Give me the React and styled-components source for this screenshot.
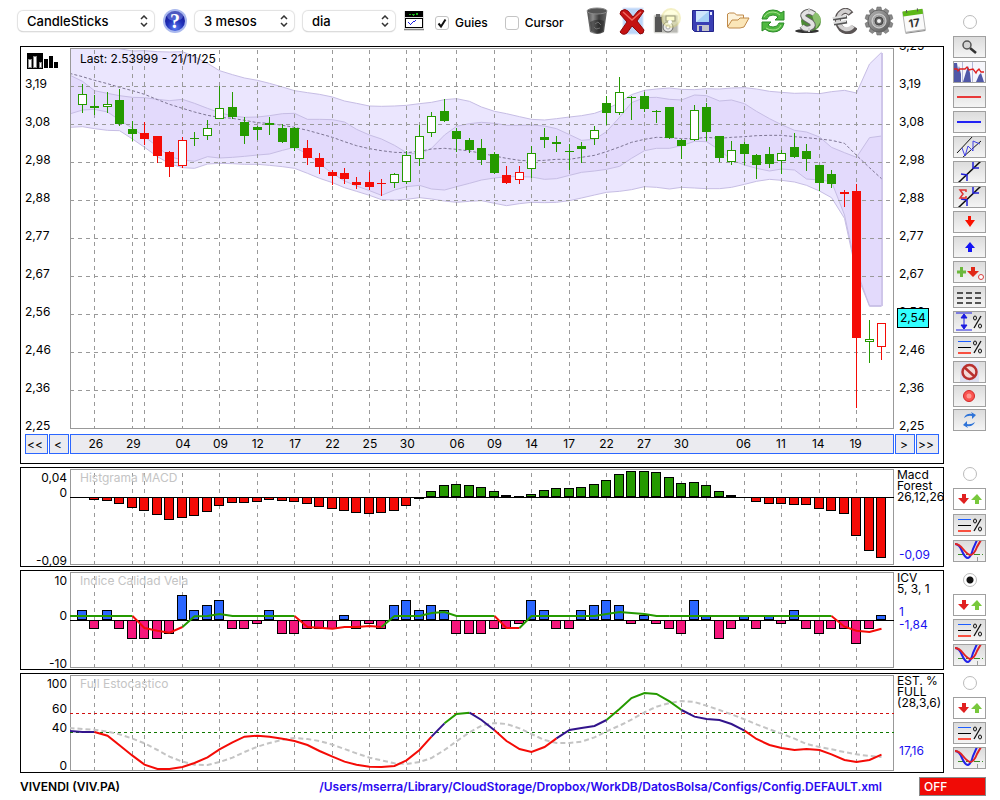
import { Fragment, useState } from 'react';
import styled, { createGlobalStyle } from 'styled-components';

const GREEN = '#259a00';
const RED = '#f40b06';
const BLUE = '#2b66ff';
const PINK = '#f5167c';
const INDIGO = '#32148c';
const PLOT_WIDTH = 824;

// x of the nth session, from the left edge of a plot
const sx = (i) => Math.floor(12.2 + 12.49 * i);

const guides = [1, 4, 5, 8, 11, 14, 17, 20, 23, 26, 27, 30, 33, 36, 39, 42, 45, 48, 50, 53, 56, 59, 62];

const dates = [
  [1, '26'], [4, '29'], [8, '04'], [11, '09'], [14, '12'], [17, '17'], [20, '22'], [23, '25'], [26, '30'], [30, '06'],
  [33, '09'], [36, '14'], [39, '17'], [42, '22'], [45, '27'], [48, '30'], [53, '06'], [56, '11'], [59, '14'], [62, '19'],
];

const prices = ['3,19', '3,08', '2,98', '2,88', '2,77', '2,67', '2,56', '2,46', '2,36', '2,25'];

// Band series start one session before the first candle
const bands = {
  outerTop: [
    0, 8, 14, 20, 26, 33, 32, 35, 36, 35, 50, 70, 92, 104, 114, 121, 130, 141, 152, 158, 163, 171, 183, 190, 198, 199, 198,
    196, 191, 187, 179, 176, 184, 201, 214, 221, 230, 238, 240, 236, 231, 227, 220, 207, 188, 164, 151, 147, 144, 148, 149,
    146, 147, 144, 143, 147, 154, 157, 160, 159, 161, 155, 151, 159, 72, 37,
  ],
  innerTop: [
    105, 124, 152, 160, 167, 172, 173, 178, 182, 178, 190, 205, 218, 228, 232, 231, 227, 221, 220, 238, 238, 239, 246, 268,
    285, 297, 316, 338, 343, 325, 285, 259, 251, 247, 250, 256, 256, 255, 258, 266, 284, 301, 298, 275, 232, 188, 173, 172,
    178, 180, 165, 167, 183, 180, 191, 214, 236, 254, 271, 276, 291, 322, 338, 352, 293, 288,
  ],
  middle: [
    100, 110, 121, 131, 142, 152, 163, 179, 193, 205, 216, 226, 232, 235, 241, 248, 250, 256, 262, 271, 281, 292, 305, 317,
    326, 332, 337, 338, 334, 327, 325, 328, 333, 340, 348, 355, 361, 363, 361, 358, 358, 352, 346, 335, 321, 307, 298, 292,
    293, 296, 296, 292, 295, 292, 290, 287, 286, 286, 290, 293, 297, 301, 310, 346, 383, 416,
  ],
  innerBottom: [
    222, 210, 208, 216, 240, 265, 290, 320, 350, 360, 364, 350, 354, 352, 349, 345, 342, 331, 322, 342, 372, 400, 423, 438,
    452, 466, 450, 440, 436, 447, 450, 440, 430, 420, 414, 410, 410, 411, 418, 416, 406, 397, 393, 388, 379, 355, 332, 325,
    325, 317, 304, 305, 330, 360, 375, 385, 393, 387, 390, 417, 420, 425, 525, 690, 797, 797,
  ],
  outerBottom: [
    262, 260, 266, 271, 272, 297, 322, 350, 371, 383, 385, 372, 370, 371, 373, 373, 376, 380, 385, 400, 415, 428, 443, 454,
    466, 479, 480, 478, 473, 477, 483, 487, 484, 482, 490, 497, 491, 487, 488, 487, 482, 474, 465, 457, 454, 449, 440, 442,
    447, 442, 444, 446, 446, 442, 433, 424, 418, 421, 426, 436, 453, 473, 535, 700, 799, 799,
  ],
};

// high, body top, body bottom, low, kind (upper case is filled, G green, R red)
const candles = [
  [132, 162, 195, 218, 'g'], [166, 198, 204, 224, 'G'], [156, 192, 201, 218, 'g'], [147, 180, 251, 257, 'G'],
  [243, 267, 281, 304, 'G'], [246, 279, 297, 315, 'R'], [288, 288, 347, 369, 'R'], [333, 336, 381, 410, 'R'],
  [292, 300, 378, 384, 'r'], [276, 294, 297, 318, 'G'], [240, 264, 288, 300, 'g'], [138, 204, 237, 237, 'g'],
  [156, 201, 231, 237, 'G'], [231, 246, 288, 312, 'G'], [258, 261, 270, 300, 'G'], [231, 249, 255, 285, 'G'],
  [252, 264, 306, 309, 'G'], [262, 264, 324, 333, 'G'], [300, 324, 354, 375, 'R'], [339, 354, 381, 402, 'R'],
  [390, 396, 408, 435, 'R'], [384, 399, 417, 432, 'R'], [411, 426, 435, 447, 'R'], [396, 426, 441, 450, 'R'],
  [417, 429, 432, 468, 'R'], [399, 402, 429, 444, 'g'], [333, 345, 426, 432, 'g'], [255, 288, 357, 378, 'g'],
  [216, 228, 279, 291, 'g'], [177, 213, 243, 246, 'G'], [264, 273, 297, 336, 'G'], [294, 300, 330, 339, 'G'],
  [297, 324, 360, 375, 'G'], [336, 342, 399, 402, 'G'], [378, 405, 429, 432, 'R'], [378, 396, 420, 432, 'r'],
  [318, 339, 387, 414, 'g'], [264, 291, 300, 324, 'G'], [288, 306, 312, 336, 'G'], [312, 333, 336, 390, 'G'],
  [306, 318, 327, 368, 'G'], [258, 270, 297, 315, 'g'], [168, 189, 219, 255, 'G'], [111, 156, 219, 225, 'g'],
  [168, 171, 174, 240, 'G'], [156, 168, 207, 216, 'G'], [210, 213, 216, 249, 'G'], [201, 201, 294, 297, 'G'],
  [297, 300, 318, 357, 'G'], [195, 210, 300, 303, 'g'], [189, 201, 276, 303, 'G'], [288, 288, 354, 366, 'G'],
  [303, 330, 366, 375, 'g'], [306, 312, 342, 375, 'G'], [342, 345, 375, 417, 'G'], [321, 342, 372, 384, 'G'],
  [330, 339, 363, 402, 'g'], [279, 321, 351, 354, 'G'], [312, 333, 357, 393, 'G'], [375, 375, 429, 453, 'G'],
  [390, 402, 432, 444, 'G'], [450, 456, 462, 501, 'R'], [432, 453, 894, 1104, 'R'], [840, 897, 906, 969, 'g'],
  [849, 849, 921, 960, 'r'],
];

const macd = [
  0, -3, -4, -7, -11, -14, -18, -23, -21, -19, -15, -9, -6, -6, -5, -3, -4, -5, -7, -10, -12, -14, -16, -17, -16, -14, -9,
  -2, 6, 12, 13, 12, 10, 6, 2, 1, 3, 7, 9, 9, 10, 13, 17, 23, 26, 26, 25, 20, 14, 15, 12, 6, 2, 0, -5, -7, -7, -8, -8,
  -12, -14, -17, -39, -54, -61,
];

const icv = [
  2, -2, 2, -2, -4, -4, -4, -3, 5, 2, 3, 4, -2, -2, -1, 2, -3, -3, -2, -2, -2, 1, -2, -1, -2, 3, 4, 2, 3, 2, -3, -3, -3,
  -2, -2, -1, 4, 2, -2, -2, 2, 3, 4, 3, -1, 1, -1, -2, -3, 4, 1, -4, -2, 1, -2, 1, -1, 2, -2, -3, -2, -2, -5, -2, 1,
];

// [colour, first session, values]
const icvLine = [
  [GREEN, -1, [168, 168, 168, 168, 168, 168]],
  [RED, 4, [168, 204, 212, 218, 201]],
  [GREEN, 8, [201, 169, 168, 162, 168, 168, 168, 168, 168, 168]],
  [RED, 17, [168, 201, 203, 206, 201, 201, 198, 201]],
  [GREEN, 24, [201, 168, 168, 168, 159, 156, 168, 168, 168, 168]],
  [RED, 33, [168, 204, 204]],
  [GREEN, 35, [204, 168, 168, 168, 168, 168, 168, 162, 156, 159, 162, 168, 168]],
  [GREEN, 47, [168, 168, 168, 168, 168, 168, 168, 168, 168, 168, 168, 168, 168, 168]],
  [RED, 60, [168, 200, 212, 216, 206]],
];

const stochLine = [
  [INDIGO, -1, [513, 516, 516]],
  [
    RED, 1,
    [516, 527, 556, 587, 614, 627, 627, 621, 609, 592, 568, 547, 530, 527, 530, 536, 543, 555, 573, 590, 605, 614, 620, 621, 618, 601, 570, 530],
  ],
  [INDIGO, 28, [530, 490]],
  [GREEN, 29, [490, 462, 458]],
  [INDIGO, 31, [458, 480, 511]],
  [RED, 33, [511, 543, 567, 576, 561, 535]],
  [INDIGO, 38, [535, 510, 504, 498, 480]],
  [GREEN, 42, [480, 447, 414, 399, 402, 424, 450]],
  [INDIGO, 48, [450, 470, 477, 480, 492, 512]],
  [RED, 53, [512, 537, 555, 564, 570, 567, 570, 583, 600, 606, 600, 584]],
];

const stochSignal = [
  504, 507, 509, 515, 523, 536, 550, 570, 590, 605, 614, 615, 606, 593, 576, 560, 549, 539, 534, 537, 543, 554, 567, 580,
  593, 601, 610, 612, 606, 594, 570, 544, 517, 497, 489, 492, 505, 522, 540, 549, 549, 545, 532, 514, 497, 479, 457, 440,
  429, 423, 426, 437, 450, 463, 478, 493, 508, 521, 536, 552, 561, 568, 576, 583, 588, 591,
];

const priceY = (v) => v / 3 - 8;
const icvY = (v) => v / 3 - 12;
const stochY = (v) => v / 3 - 115;

const points = (values, first, y) => values.map((v, i) => `${sx(first + i) + 0.5},${y(v)}`);

const area = (top, bottom) => [...points(top, -1, priceY), ...points(bottom, -1, priceY).reverse()].join(' ');

const Guides = ({ from, to }) =>
  guides.map((i) => (
    <line key={i} x1={sx(i) + 0.5} x2={sx(i) + 0.5} y1={from} y2={to} stroke="#999" strokeDasharray="4 4" />
  ));

const Frame = ({ height }) => (
  <rect x="0.5" y="0.5" width={PLOT_WIDTH - 1} height={height - 1} fill="none" stroke="#999" />
);

const PlotSvg = ({ height, children }) => (
  <Plot viewBox={`0 0 ${PLOT_WIDTH} ${height}`} height={height} preserveAspectRatio="none" aria-hidden="true">
    {children}
  </Plot>
);

const Box = ({ x, y, width, height, border, fill }) => (
  <>
    <rect x={x} y={y} width={width} height={height} fill={border} />
    {height > 2 && <rect x={x + 1} y={y + 1} width={width - 2} height={height - 2} fill={fill} />}
  </>
);

const Bars = ({ values, zero, size, up, down }) => (
  <g shapeRendering="crispEdges">
    {values.map((v, i) => (
      <Box
        key={i}
        x={sx(i) - 5}
        y={v > 0 ? zero - size(v) : zero}
        width={10}
        height={size(v)}
        border="#000"
        fill={v > 0 ? up : down}
      />
    ))}
    <line x1="0" x2={PLOT_WIDTH} y1={zero + 0.5} y2={zero + 0.5} stroke="#000" />
  </g>
);

const Segments = ({ data, y }) =>
  data.map(([color, first, values]) => (
    <polyline key={`${color}${first}`} points={points(values, first, y).join(' ')} fill="none" stroke={color} strokeWidth="2" />
  ));

const PricePlot = () => (
  <PlotSvg height={381}>
    <polygon points={area(bands.outerTop, bands.outerBottom)} fill="#ebe6fe" />
    <polygon points={area(bands.innerTop, bands.innerBottom)} fill="#e3dafc" />
    {['outerTop', 'innerTop', 'innerBottom', 'outerBottom'].map((name) => (
      <polyline key={name} points={points(bands[name], -1, priceY).join(' ')} fill="none" stroke="#c6bde4" />
    ))}
    <line x1={sx(64) + 1} x2={sx(64) + 1} y1="5" y2="258" stroke="#cfc6ea" strokeWidth="2" />
    <polyline points={points(bands.middle, -1, priceY).join(' ')} fill="none" stroke="#7d7593" strokeDasharray="3 2" />
    <g shapeRendering="crispEdges">
      {prices.slice(0, -1).map((price, i) => (
        <line key={price} x1="0" x2={PLOT_WIDTH} y1={38.5 + i * 38} y2={38.5 + i * 38} stroke="#999" strokeDasharray="4 4" />
      ))}
      <Guides from={2} to={381} />
      <Frame height={381} />
      {candles.map(([high, top, bottom, low, kind], i) => {
        const color = kind.toLowerCase() === 'g' ? GREEN : RED;
        const hollow = kind === 'g' || kind === 'r';
        const y1 = Math.round(priceY(top));
        const y2 = Math.round(priceY(bottom));
        return (
          <Fragment key={i}>
            <line x1={sx(i) + 0.5} x2={sx(i) + 0.5} y1={Math.round(priceY(high))} y2={Math.round(priceY(low))} stroke={color} />
            <Box x={sx(i) - 4} y={y1} width={9} height={y2 - y1} border={color} fill={hollow ? '#fff' : color} />
          </Fragment>
        );
      })}
    </g>
  </PlotSvg>
);

const MacdPlot = () => (
  <PlotSvg height={96}>
    <g shapeRendering="crispEdges">
      <Guides from={4} to={96} />
      <Frame height={96} />
    </g>
    <Bars values={macd} zero={28} size={Math.abs} up={GREEN} down={RED} />
  </PlotSvg>
);

const IcvPlot = () => (
  <PlotSvg height={96}>
    <g shapeRendering="crispEdges">
      <Guides from={4} to={96} />
      <Frame height={96} />
    </g>
    <Bars values={icv} zero={48} size={(v) => (v > 0 ? v * 5 : -v * 5 - 1)} up={BLUE} down={PINK} />
    <Segments data={icvLine} y={icvY} />
  </PlotSvg>
);

const StochPlot = () => (
  <PlotSvg height={96}>
    <g shapeRendering="crispEdges">
      <Guides from={4} to={96} />
      <Frame height={96} />
      <line x1="0" x2={PLOT_WIDTH} y1="38.5" y2="38.5" stroke="#d01010" strokeDasharray="3 3" />
      <line x1="0" x2={PLOT_WIDTH} y1="57.5" y2="57.5" stroke="#107800" strokeDasharray="3 3" />
    </g>
    <polyline
      points={points(stochSignal, -1, stochY).join(' ')}
      fill="none"
      stroke="#c4c4c4"
      strokeWidth="2"
      strokeDasharray="5 3"
    />
    <Segments data={stochLine} y={stochY} />
  </PlotSvg>
);

/* Toolbar icons */

const HelpIcon = () => (
  <svg width="24" height="24" viewBox="0 0 24 24">
    <defs>
      <radialGradient id="help" cx="50%" cy="85%" r="85%">
        <stop offset="0" stopColor="#5a7cf0" />
        <stop offset="0.5" stopColor="#1f2fb8" />
        <stop offset="1" stopColor="#14148a" />
      </radialGradient>
    </defs>
    <circle cx="12" cy="12" r="12" fill="#a9b8ee" />
    <circle cx="12" cy="12" r="10" fill="url(#help)" />
    <ellipse cx="12" cy="7" rx="8" ry="5" fill="#8fa4f5" opacity="0.45" />
    <text x="12" y="19" textAnchor="middle" fontFamily="Liberation Serif, serif" fontWeight="700" fontSize="20" fill="#fff">
      ?
    </text>
  </svg>
);

const MonitorIcon = () => (
  <svg width="20" height="20" viewBox="0 0 20 20" shapeRendering="crispEdges">
    <rect width="20" height="20" fill="#ddd" />
    <rect x="1" width="18" height="6" fill="#000" />
    <path d="M5 3h2v1h-2zM8 3h3v1h-3zM12 2h2v2h-2zM9 4h1v1h-1z" fill="#18b018" />
    <rect x="1.5" y="7.5" width="17" height="9" fill="#fff" stroke="#000" />
    <path d="M4 11l2 2 1 0 3-3 1 0 1-1" fill="none" stroke="#2020e0" />
    <rect y="18" width="20" height="1" fill="#888" />
  </svg>
);

const TrashIcon = () => (
  <svg width="22" height="28" viewBox="0 0 22 28">
    <defs>
      <linearGradient id="bin">
        <stop offset="0" stopColor="#4a4a4a" />
        <stop offset="0.3" stopColor="#8c8c8c" />
        <stop offset="0.6" stopColor="#3c3c3c" />
        <stop offset="1" stopColor="#6a6a6a" />
      </linearGradient>
    </defs>
    <path d="M1 4l3 21q7 4 14 0l3-21z" fill="url(#bin)" />
    <ellipse cx="11" cy="4" rx="10" ry="3" fill="#555" stroke="#8a8a8a" />
    <path d="M4 15q7-4 14-1l-1 10q-6 4-12 0z" fill="#222" opacity="0.5" />
    <path d="M9 17l3-2 3 3M8 20l2 2 4-1" fill="none" stroke="#707070" />
  </svg>
);

const DeleteIcon = () => (
  <svg width="26" height="28" viewBox="0 0 26 28">
    <rect x="4" y="1" width="20" height="26" fill="#bcd6f8" stroke="#dbe8fb" />
    <path
      d="M2 4q4-3 7 0l5 6 5-6q3-3 6 0l-7 10 7 9q0 4-4 4l-8-8-5 7q-4 3-7-1l7-10-7-8z"
      fill="#c41212"
      stroke="#8c0808"
    />
    <path d="M4 5l9 8 9-8" fill="none" stroke="#ee6a60" strokeWidth="1.500" />
  </svg>
);

const CameraIcon = () => (
  <svg width="28" height="28" viewBox="0 0 28 28">
    <rect x="1" y="8" width="24" height="18" rx="1" fill="#b9b9b4" stroke="#e4e4e0" />
    <rect x="2" y="10" width="7" height="15" fill="#555" />
    <rect x="3" y="7" width="4" height="3" fill="#666" />
    <rect x="13" y="9" width="9" height="5" fill="#fafae0" stroke="#555" />
    <circle cx="15" cy="20" r="5" fill="#e8e8e8" stroke="#666" />
    <circle cx="15" cy="20" r="2" fill="#fff" stroke="#aaa" />
    <circle cx="18" cy="11" r="9" fill="#ffffb0" opacity="0.4" stroke="#e4dc70" strokeWidth="2" />
    <circle cx="17" cy="15" r="2" fill="#fff" />
  </svg>
);

const SaveIcon = () => (
  <svg width="22" height="22" viewBox="0 0 22 22">
    <path d="M.5.5h21v21H2.500l-2-2z" fill="#3a3fb4" stroke="#23258a" />
    <rect x="4" y="1" width="13" height="11" fill="#cfe6fb" />
    <path d="M4 12L17 1v11z" fill="#a7d0f5" />
    <rect x="18" y="2" width="2" height="3" fill="#e4e8ff" />
    <rect x="5" y="15" width="12" height="6" fill="#c4c4cc" />
    <rect x="7" y="16" width="3" height="5" fill="#3a3fb4" />
  </svg>
);

const FolderIcon = () => (
  <svg width="24" height="20" viewBox="0 0 24 20">
    <path d="M1.500 16V3l2-1h5l2 2h7v5" fill="#fdf3dc" stroke="#c08a4a" />
    <path d="M1.500 16L6 9h6l2-2h9l-5 9-4 1H3z" fill="#fbe6b8" stroke="#c08a4a" strokeLinejoin="round" />
  </svg>
);

const ReloadIcon = () => (
  <svg width="24" height="24" viewBox="0 0 24 24">
    <path d="M1 10Q3 1 12 1q5 0 8 3l3-2v9h-9l3-3q-2-2-5-2-5 0-6 4z" fill="#4fb840" stroke="#2b8a28" />
    <path d="M23 14q-2 9-11 9-5 0-8-3l-3 2v-9h9l-3 3q2 2 5 2 5 0 6-4z" fill="#4fb840" stroke="#2b8a28" />
    <path d="M3 8q3-5 9-5 4 0 7 3M5 19q3 2 7 2 6 0 8-5" fill="none" stroke="#a6e08c" />
  </svg>
);

const DollarIcon = () => (
  <svg width="26" height="26" viewBox="0 0 26 26">
    <ellipse cx="12" cy="23" rx="12" ry="2" fill="#333" />
    <circle cx="16" cy="13" r="10" fill="#4c8a34" />
    <path d="M16 3a10 10 0 0 1 10 10l-5 8z" fill="#8cc070" />
    <path d="M19 6q-5-4-9-1t1 6l5 3q4 4-1 6t-8-2" fill="none" stroke="#666" strokeWidth="6" />
    <path d="M19 6q-5-4-9-1t1 6l5 3q4 4-1 6t-8-2" fill="none" stroke="#e2e2e2" strokeWidth="4" />
    <path d="M14 0v4M14 20v4" stroke="#ccc" strokeWidth="2" />
  </svg>
);

const EuroIcon = () => (
  <svg width="26" height="26" viewBox="0 0 26 26">
    <path d="M20 6q-4-5-9-2t-4 10q2 8 8 9t9-4" fill="none" stroke="#5a5454" strokeWidth="6" />
    <path d="M19 5q-4-4-8-1t-4 9q2 7 7 8t8-3" fill="none" stroke="#d2d0d0" strokeWidth="4" />
    <path d="M2 11l14-2M3 16l13-2" stroke="#555" strokeWidth="3" />
    <path d="M2 10l13-2M3 15l12-2" stroke="#ddd" strokeWidth="2" />
  </svg>
);

const GearIcon = () => (
  <svg width="30" height="30" viewBox="0 0 30 30">
    <defs>
      <linearGradient id="gear" x2="1" y2="1">
        <stop offset="0" stopColor="#b5b5b5" />
        <stop offset="1" stopColor="#555" />
      </linearGradient>
    </defs>
    <g fill="#8a8a8a" stroke="#606060" strokeWidth="0.5">
      {[0, 36, 72, 108, 144, 180, 216, 252, 288, 324].map((a) => (
        <path key={a} d="M12 5l1-4h4l1 4z" transform={`rotate(${a} 15 15)`} />
      ))}
    </g>
    <circle cx="15" cy="15" r="11" fill="url(#gear)" stroke="#666" />
    <circle cx="15" cy="15" r="7" fill="#a4a4a4" stroke="#d8d8d8" />
    <circle cx="15" cy="15" r="4" fill="#666" stroke="#444" />
    <circle cx="15" cy="15" r="2" fill="#f4f4f4" />
  </svg>
);

const CalendarIcon = () => (
  <svg width="26" height="26" viewBox="0 0 26 26">
    <g transform="rotate(-8 13 13)">
      <rect x="3" y="3" width="20" height="20" fill="#fafafa" stroke="#b4b4b4" />
      <rect x="3" y="2" width="20" height="5" fill="#5cb818" />
      <path d="M7 1v3M18 1v3" stroke="#555" />
      <path d="M3 24h20" stroke="#888" />
      <text x="13" y="19" textAnchor="middle" fontFamily="Inter, sans-serif" fontWeight="700" fontSize="11" fill="#333">
        17
      </text>
    </g>
  </svg>
);

/* Side bar icons, 31 x 20 */

const SideSvg = ({ children }) => (
  <svg width="31" height="20" viewBox="0 0 31 20" aria-hidden="true">
    {children}
  </svg>
);

const Percent = () => (
  <g fill="none" stroke="#111">
    <path d="M27 4l-7 12" strokeWidth="1.300" />
    <ellipse cx="21" cy="6" rx="1.500" ry="2" />
    <ellipse cx="26" cy="14" rx="1.500" ry="2" />
  </g>
);

const LoupeIcon = () => (
  <SideSvg>
    <path d="M16 11l6 5" stroke="#333" strokeWidth="2.500" />
    <circle cx="13" cy="8" r="4" fill="#d4d4d4" stroke="#555" strokeWidth="1.500" />
  </SideSvg>
);

const HistogramIcon = () => (
  <SideSvg>
    <rect width="31" height="20" fill="#f6f6fb" />
    <path d="M0 20V1h3l1 7 1-4 2 8v8zM9 20l3-10 2-6 2 7 1 9zM22 20l3-7 2-2 3 9z" fill="#5058a8" />
    <path d="M8.500 0v20M18.500 0v20" stroke="#b4b8d8" />
    <path d="M0 7h3l1 2 2-2h5l2-2 2 3 4-1 3 4 1-2 2-2 2 3 3 0" fill="none" stroke="#e02020" strokeWidth="1.300" />
  </SideSvg>
);

const LineIcon = ({ color }) => (
  <SideSvg>
    <rect x="3" y="9" width="24" height="2" fill={color} />
  </SideSvg>
);

const ChannelIcon = () => (
  <SideSvg>
    <path d="M3 16L19-1M8 21L27 4" stroke="#111" />
    <path d="M8 11l3 8 3-10 5 5V4l7 3" fill="none" stroke="#4040e8" />
  </SideSvg>
);

const TrendIcon = ({ sum }) => (
  <SideSvg>
    <path d="M4 21L27-1" stroke="#111" strokeWidth="1.500" />
    <path d="M7 12l6 1 0 6M19-1v7h6" fill="none" stroke="#2020d8" strokeWidth="1.500" />
    {sum && <path d="M12 5V3H6l3 4-3 4h6V9" fill="none" stroke="#e03030" strokeWidth="1.500" />}
  </SideSvg>
);

const DownIcon = () => (
  <SideSvg>
    <path d="M14 4h3v4h4l-5 7-5-7h3z" fill="#fa1100" />
  </SideSvg>
);

const UpIcon = () => (
  <SideSvg>
    <path d="M14 15h4v-4h3l-5-6-5 6h3z" fill="#1414f4" />
  </SideSvg>
);

const AddSignalIcon = () => (
  <SideSvg>
    <path d="M3 10h9M7.500 5v10" stroke="#6cb83c" strokeWidth="3" />
    <path d="M17 5h4v4h4l-6 6-6-6h4z" fill="#e02818" />
    <circle cx="27" cy="15" r="2.500" fill="#fff" stroke="#d84040" />
  </SideSvg>
);

const DashesIcon = () => (
  <SideSvg>
    <path d="M3 6h24M3 11h24M3 16h24" stroke="#222" strokeWidth="1.500" strokeDasharray="6 3" />
  </SideSvg>
);

const RangeIcon = () => (
  <SideSvg>
    <path d="M2 1h16M2 18h16M10 2v15M7 6l3-4 3 4zM7 13l3 4 3-4z" fill="#1c1ce0" stroke="#1c1ce0" />
    <Percent />
  </SideSvg>
);

const LevelsIcon = () => (
  <SideSvg>
    <rect x="4" y="4" width="13" height="1" fill="#1c5cff" />
    <rect x="4" y="10" width="13" height="1" fill="#000" />
    <rect x="4" y="15" width="13" height="2" fill="#f85040" />
    <Percent />
  </SideSvg>
);

const ForbiddenIcon = () => (
  <SideSvg>
    <rect x="6" y="0" width="19" height="20" fill="#dcdff0" />
    <circle cx="15.500" cy="10" r="7" fill="#f3d8d8" stroke="#b83030" strokeWidth="2.500" />
    <path d="M10 5l11 10" stroke="#b83030" strokeWidth="2.500" />
  </SideSvg>
);

const RecordIcon = () => (
  <SideSvg>
    <circle cx="15" cy="10" r="5.500" fill="#fa5450" stroke="#d02828" />
    <circle cx="15" cy="10" r="2.500" fill="#ff9890" />
  </SideSvg>
);

const SyncIcon = () => (
  <SideSvg>
    <path d="M10 8q2-5 8-4l-1-2 5 3-4 4v-3q-4-1-8 2z" fill="#2f74d8" />
    <path d="M21 12q-2 5-8 4l1 2-5-3 4-4v3q4 1 8-2z" fill="#2f74d8" />
  </SideSvg>
);

const SignalsIcon = () => (
  <SideSvg>
    <path d="M8 5h4v4h3l-5 6-6-6h4z" fill="#e02020" />
    <path d="M21 15h4v-4h3l-5-6-6 6h4z" fill="#78c83c" />
  </SideSvg>
);

const CurvesIcon = () => (
  <SideSvg>
    <path d="M4 13.500h25" stroke="#3c8c28" strokeDasharray="6 2" />
    <path d="M23.500 16v4" stroke="#999" />
    <path d="M1 3q4 0 7 7t6 7q3-1 5-9l4-9" fill="none" stroke="#2222e8" strokeWidth="2" />
    <path d="M1 3q4 0 8 5t7 6q4 0 7-8l4-7" fill="none" stroke="#e02424" strokeWidth="2" />
  </SideSvg>
);

const ChartStyleIcon = () => (
  <svg width="32" height="16" viewBox="0 0 32 16" shapeRendering="crispEdges" aria-hidden="true">
    <rect width="16" height="16" fill="#000" />
    <rect x="1.500" y="6.500" width="3" height="8" fill="#fff" stroke="#888" />
    <rect x="6.500" y="3.500" width="3" height="11" fill="#fff" stroke="#888" />
    <rect x="12.500" y="9.500" width="2" height="5" fill="#fff" stroke="#888" />
    <path d="M17 15V6h4v9zM22 15V3h4v12zM27 15v-6h4v6z" fill="#000" />
  </svg>
);

const actions = [
  ['Esborra', TrashIcon], ['Elimina', DeleteIcon], ['Captura', CameraIcon], ['Desa', SaveIcon], ['Obre', FolderIcon],
  ['Recarrega', ReloadIcon], ['Dòlar', DollarIcon], ['Euro', EuroIcon], ['Opcions', GearIcon], ['Calendari', CalendarIcon],
];

const tools = [
  ['Lupa', <LoupeIcon />], ['Histograma', <HistogramIcon />], ['Línia vermella', <LineIcon color="#e83a3a" />],
  ['Línia blava', <LineIcon color="#2222f4" />], ['Canal', <ChannelIcon />], ['Tendència', <TrendIcon />],
  ['Regressió', <TrendIcon sum />], ['Venda', <DownIcon />], ['Compra', <UpIcon />], ['Senyals', <AddSignalIcon />],
  ['Nivells', <DashesIcon />], ['Rang', <RangeIcon />], ['Percentatges', <LevelsIcon />],
];

const editTools = [
  ['Treu', <ForbiddenIcon />], ['Grava', <RecordIcon />], ['Actualitza', <SyncIcon />],
];

const indicators = [
  {
    id: 'macd', title: 'Histgrama MACD', Chart: MacdPlot, loose: true,
    ticks: [[2, '0,04'], [1, '0'], [54, '-0,09']],
    notes: ['Macd', 'Forest', '26,12,26'], offset: 46, values: ['-0,09'],
  },
  {
    id: 'icv', title: 'Indice Calidad Vela', Chart: IcvPlot,
    ticks: [[2, '10'], [21, '0'], [34, '-10']],
    notes: ['ICV', '5, 3, 1'], offset: 11, values: ['1', '-1,84'],
  },
  {
    id: 'stoch', title: 'Full Estocastico', Chart: StochPlot,
    ticks: [[2, '100'], [11, '60'], [5, '40'], [24, '0']],
    notes: ['EST. %', 'FULL', '(28,3,6)'], offset: 36, values: ['17,16'],
  },
];

const Picker = ({ label, width, options }) => (
  <SelectWrap $width={width}>
    <SSelect aria-label={label}>
      {options.map((option) => (
        <option key={option}>{option}</option>
      ))}
    </SSelect>
    <svg width="8" height="12" viewBox="0 0 8 12" fill="none" stroke="#333" strokeWidth="1.500" aria-hidden="true">
      <path d="M1 4l3-3 3 3M1 8l3 3 3-3" />
    </svg>
  </SelectWrap>
);

const App = () => {
  const [guies, setGuies] = useState(true);
  const [cursor, setCursor] = useState(false);
  const [selected, setSelected] = useState('icv');

  return (
    <>
      <GlobalStyle />
      <Page>
        <Row>
          <Main>
            <Toolbar>
              <Picker label="Tipus de gràfic" width={136} options={['CandleSticks', 'Barres']} />
              <IconButton aria-label="Ajuda"><HelpIcon /></IconButton>
              <Picker label="Període" width={99} options={['3 mesos', '6 mesos']} />
              <Picker label="Interval" width={92} options={['dia', 'setmana']} />
              <IconButton aria-label="Monitor"><MonitorIcon /></IconButton>
              <CheckLabel>
                <Checkbox type="checkbox" checked={guies} onChange={() => setGuies(!guies)} />
                Guies
              </CheckLabel>
              <CheckLabel>
                <Checkbox type="checkbox" checked={cursor} onChange={() => setCursor(!cursor)} />
                Cursor
              </CheckLabel>
              <Actions>
                {actions.map(([name, Icon]) => (
                  <ActionButton key={name} aria-label={name}><Icon /></ActionButton>
                ))}
              </Actions>
            </Toolbar>
            <PricePanel>
              <PanelGrid>
                <PriceScale>
                  <StyleBadge><ChartStyleIcon /></StyleBadge>
                  {prices.map((price) => <Price key={price}>{price}</Price>)}
                </PriceScale>
                <PlotCell>
                  <PricePlot />
                  <PlotTitle $strong>Last: 2.53999 - 21/11/25</PlotTitle>
                </PlotCell>
                <PriceScale $right>
                  {['3,25', ...prices].map((price) => <Price key={price}>{price}</Price>)}
                  <LastPrice>2,54</LastPrice>
                </PriceScale>
              </PanelGrid>
              <DateBar>
                <DateNav>
                  <NavButton $wide>&lt;&lt;</NavButton>
                  <NavButton>&lt;</NavButton>
                </DateNav>
                <DateAxis>
                  {dates.map(([i, day]) => <Day key={i} $column={i + 1}>{day}</Day>)}
                </DateAxis>
                <DateNav $right>
                  <NavButton>&gt;</NavButton>
                  <NavButton $wide>&gt;&gt;</NavButton>
                </DateNav>
              </DateBar>
            </PricePanel>
          </Main>
          <Side $top={15}>
            <Radio
              type="radio"
              name="panel"
              aria-label="Preu"
              checked={selected === 'price'}
              onChange={() => setSelected('price')}
            />
            <ToolGroup $gap={3}>
              {tools.map(([name, icon]) => <ToolButton key={name} aria-label={name}>{icon}</ToolButton>)}
            </ToolGroup>
            <ToolGroup $gap={2} $follow>
              {editTools.map(([name, icon]) => <ToolButton key={name} aria-label={name}>{icon}</ToolButton>)}
            </ToolGroup>
          </Side>
        </Row>
        {indicators.map(({ id, title, Chart, loose, ticks, notes, offset, values }) => (
          <Row key={id}>
            <Main>
              <Panel>
                <PanelGrid>
                  <Scale>
                    {ticks.map(([gap, text]) => <Tick key={text} $gap={gap}>{text}</Tick>)}
                  </Scale>
                  <PlotCell>
                    <Chart />
                    <PlotTitle>{title}</PlotTitle>
                  </PlotCell>
                  <Notes>
                    {notes.map((note) => <div key={note}>{note}</div>)}
                    <Values $offset={offset}>
                      {values.map((value) => <div key={value}>{value}</div>)}
                    </Values>
                  </Notes>
                </PanelGrid>
              </Panel>
            </Main>
            <Side $top={loose ? 0 : 3}>
              <Radio
                type="radio"
                name="panel"
                aria-label={title}
                checked={selected === id}
                onChange={() => setSelected(id)}
              />
              <ToolGroup $gap={loose ? 4 : 3}>
                <ToolButton $plain aria-label="Senyals"><SignalsIcon /></ToolButton>
                <ToolButton aria-label="Percentatges"><LevelsIcon /></ToolButton>
                <ToolButton aria-label="Corbes"><CurvesIcon /></ToolButton>
              </ToolGroup>
            </Side>
          </Row>
        ))}
        <Footer>
          <span>VIVENDI (VIV.PA)</span>
          <ConfigLink href="#config">
            /Users/mserra/Library/CloudStorage/Dropbox/WorkDB/DatosBolsa/Configs/Config.DEFAULT.xml
          </ConfigLink>
          <OffButton>OFF</OffButton>
        </Footer>
      </Page>
    </>
  );
};

export default App;

const GlobalStyle = createGlobalStyle`
  * {
    box-sizing: border-box;
  }
  body {
    margin: 0;
    background: #fff;
    color: #000;
    font: 12px Inter, "Liberation Sans", sans-serif;
  }
  button, select, input {
    font: inherit;
    color: inherit;
    margin: 0;
  }
  svg {
    display: block;
  }
`;

const Page = styled.div`
  display: flex;
  flex-direction: column;
  gap: 3px;
  padding: 0 14px 0 20px;
`;

const Row = styled.div`
  display: flex;
  align-items: flex-start;
  gap: 9px;
`;

const Main = styled.div`
  flex: 1;
  min-width: 0;
`;

const Toolbar = styled.div`
  display: flex;
  align-items: center;
  height: 46px;
  padding: 0 15px 4px 0;
  margin-left: -2px;
`;

const SelectWrap = styled.div`
  position: relative;
  width: ${(props) => props.$width}px;
  margin-right: 9px;
  svg {
    position: absolute;
    right: 6px;
    top: 4px;
    pointer-events: none;
  }
`;

const SSelect = styled.select`
  appearance: none;
  display: block;
  width: 100%;
  height: 20px;
  padding: 0 20px 0 9px;
  border: 0;
  border-radius: 5px;
  background: #fff;
  box-shadow: 0 0 1px 1px #e0e0e0, 0 1px 1px #aaa;
  font-size: 13px;
  font-weight: 500;
  line-height: 20px;
`;

const IconButton = styled.button`
  flex: none;
  padding: 0;
  border: 0;
  background: none;
  cursor: pointer;
  ${SelectWrap} + & {
    margin-right: 8px;
  }
`;

const ActionButton = styled(IconButton)`
  display: flex;
  justify-content: center;
  width: 30px;
`;

const CheckLabel = styled.label`
  display: flex;
  align-items: center;
  gap: 6px;
  margin: 3px 14px 0 3px;
  font-size: 12px;
  font-weight: 500;
`;

const Checkbox = styled.input`
  appearance: none;
  width: 14px;
  height: 14px;
  border: 1px solid #c4c4c4;
  border-radius: 3px;
  background: #fff;
  &:checked {
    background: #fff url("data:image/svg+xml,%3Csvg xmlns='http://www.w3.org/2000/svg' viewBox='0 0 12 12'%3E%3Cpath d='M2.500 6.500l2.500 3 4.500-7' fill='none' stroke='%23111' stroke-width='2'/%3E%3C/svg%3E");
  }
`;

const Actions = styled.div`
  flex: 1;
  display: flex;
  align-items: center;
  justify-content: space-between;
  margin-left: 4px;
`;

const Panel = styled.section`
  border: 1px solid #000;
  padding: 1px 0;
`;

const PricePanel = styled(Panel)`
  padding-bottom: 9px;
`;

const PanelGrid = styled.div`
  display: grid;
  grid-template-columns: 49px 1fr 49px;
`;

const PlotCell = styled.div`
  position: relative;
  min-width: 0;
`;

const Plot = styled.svg`
  width: 100%;
`;

const PlotTitle = styled.div`
  position: absolute;
  left: 10px;
  top: ${(props) => (props.$strong ? 4 : 2)}px;
  line-height: 14px;
  color: ${(props) => (props.$strong ? '#000' : '#c4c4c4')};
`;

const PriceScale = styled.div`
  position: relative;
  height: 381px;
  padding-left: ${(props) => (props.$right ? 5 : 4)}px;
  clip-path: ${(props) => (props.$right ? 'inset(-1px 0 -12px 0)' : 'none')};
  & > :first-child {
    margin-top: ${(props) => (props.$right ? -21 : 0)}px;
  }
`;

const StyleBadge = styled.div`
  height: 17px;
  padding: 5px 0 0 2px;
`;

const Price = styled.div`
  line-height: 38px;
`;

const LastPrice = styled.div`
  position: absolute;
  left: 3px;
  top: 260px;
  padding: 0 2px;
  border: 1px solid #000;
  background: #3ff;
  line-height: 18px;
`;

const DateBar = styled.div`
  display: grid;
  grid-template-columns: 49px 1fr 49px;
  margin-top: 5px;
  height: 20px;
`;

const DateNav = styled.div`
  display: flex;
  gap: 1px;
  padding: ${(props) => (props.$right ? '0 0 0 1px' : '0 1px 0 4px')};
`;

const NavButton = styled.button`
  width: ${(props) => (props.$wide ? 23 : 20)}px;
  height: 20px;
  padding: 0 0 0 ${(props) => (props.$wide ? 1 : 4)}px;
  border: 1px solid ${BLUE};
  background: #ebebf0;
  text-align: left;
`;

const DateAxis = styled.div`
  display: grid;
  grid-template-columns: repeat(66, 1fr);
  border: 1px solid ${BLUE};
  background: #ebebf0;
`;

const Day = styled.span`
  grid-column: ${(props) => props.$column} / span 2;
  grid-row: 1;
  min-width: 0;
  text-align: center;
  line-height: 18px;
`;

/* The lowest tick may hang over the edge of the plot */
const Scale = styled.div`
  margin-bottom: -12px;
  padding-right: 3px;
  text-align: right;
`;

const Tick = styled.div`
  margin-top: ${(props) => props.$gap}px;
  line-height: 14px;
`;

const Notes = styled.div`
  padding-left: 3px;
  line-height: 11px;
  white-space: nowrap;
  overflow: hidden;
`;

const Values = styled.div`
  margin-top: ${(props) => props.$offset}px;
  padding-left: 2px;
  line-height: 13px;
  color: #1a10f0;
`;

const Side = styled.div`
  flex: none;
  display: flex;
  flex-direction: column;
  align-items: center;
  width: 33px;
  padding-top: ${(props) => props.$top}px;
`;

const Radio = styled.input`
  appearance: none;
  width: 14px;
  height: 14px;
  margin-bottom: 7px;
  border: 1px solid #bbb;
  border-radius: 50%;
  background: #fff;
  &:checked {
    background: radial-gradient(circle, #111 3px, #fff 4px);
  }
`;

const ToolGroup = styled.div`
  display: flex;
  flex-direction: column;
  gap: ${(props) => props.$gap}px;
  margin-top: ${(props) => (props.$follow ? 3 : 0)}px;
`;

const ToolButton = styled.button`
  width: 33px;
  height: 22px;
  padding: 0;
  border: 1px solid #a0a0a0;
  background: ${(props) => (props.$plain ? '#fff' : 'linear-gradient(#dcdcdc, #f4f4f4)')};
  overflow: hidden;
`;

const Footer = styled.footer`
  display: flex;
  align-items: center;
  height: 20px;
  font-size: 12px;
  font-weight: 600;
`;

const ConfigLink = styled.a`
  margin: 0 37px 0 auto;
  color: #2a08f0;
  text-decoration: none;
`;

const OffButton = styled.button`
  width: 67px;
  height: 19px;
  padding: 0 4px;
  border: 1px solid #888;
  background: #f00b06;
  color: #fff;
  font-weight: 500;
  text-align: left;
`;
